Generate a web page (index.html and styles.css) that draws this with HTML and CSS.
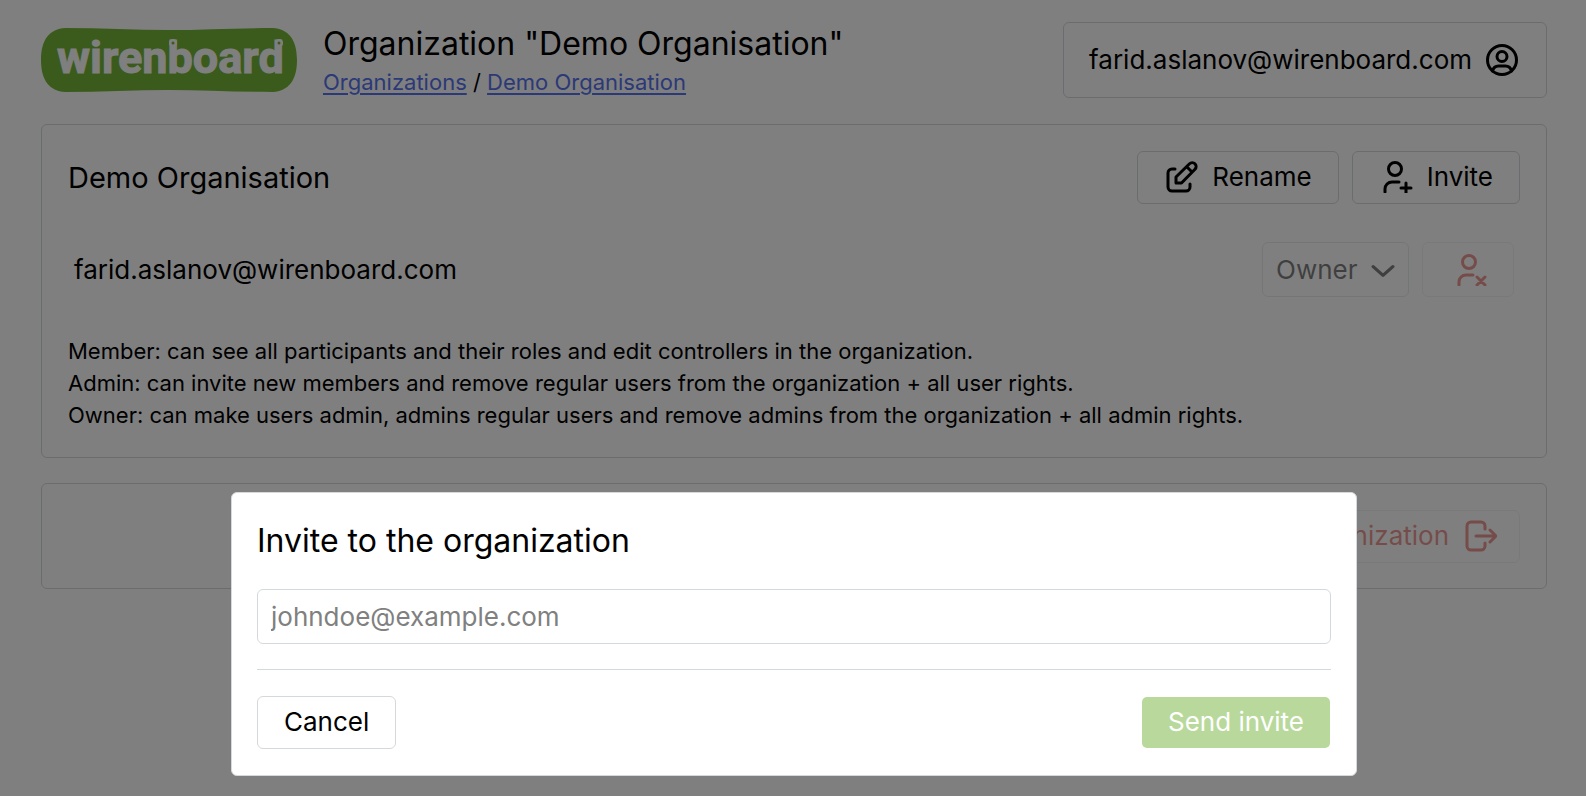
FILE: index.html
```
<!DOCTYPE html>
<html lang="en">
<head>
<meta charset="utf-8">
<title>Organization "Demo Organisation"</title>
<link rel="stylesheet" href="styles.css">
</head>
<body>
<div class="page">
  <header class="header">
    <svg class="logo" viewBox="0 0 256 64" role="img" aria-label="wirenboard">
      <path class="logo-plate" d="M0 32C0 11 9 1 24 0C60 0 95 2 128 2S196 0 232 0C247 1 256 11 256 32S247 63 232 64C196 64 161 62 128 62S60 64 24 64C9 63 0 53 0 32Z"/>
      <text class="logo-text" x="16" y="45">wirenboard</text>
      <circle class="logo-knob" cx="132" cy="15" r="4"/><circle class="logo-knob" cx="238" cy="15" r="4"/>
      <circle class="logo-plate" cx="132" cy="15" r="1.500"/><circle class="logo-plate" cx="238" cy="15" r="1.500"/>
    </svg>
    <div class="heading">
      <h1 class="title">Organization "Demo Organisation"</h1>
      <nav class="crumbs" aria-label="Breadcrumb"><a href="#organizations">Organizations</a> / <a href="#demo">Demo Organisation</a></nav>
    </div>
    <button class="account" type="button">farid.aslanov@wirenboard.com
      <svg class="icon" viewBox="0 0 32 32"><circle cx="16" cy="16" r="14.500"/><circle cx="16" cy="12.500" r="5"/><path d="M6.500 27c1-4 3.500-5 6-5h7c2.500 0 5 1 6 5"/></svg>
    </button>
  </header>

  <main class="main">
    <section class="card">
      <div class="card-head">
        <h2 class="subtitle">Demo Organisation</h2>
        <div class="actions">
          <button class="btn btn-icon" type="button"><svg class="icon" viewBox="0 0 32 32"><path d="M9 8H6a4 4 0 0 0-4 4v14a4 4 0 0 0 4 4h14a4 4 0 0 0 4-4v-3"/><path d="M10 22v-6L23.500 2.800a3.700 3.700 0 0 1 5.500 5.400L15.500 22zM21 6l5 5"/></svg>Rename</button>
          <button class="btn btn-icon" type="button"><svg class="icon" viewBox="0 0 32 32"><circle cx="14" cy="8" r="6.500"/><path d="M4 31v-3a7 7 0 0 1 7-7h7M25 22v10M20 27h10"/></svg>Invite</button>
        </div>
      </div>
      <ul class="members">
        <li class="member">
          <span class="member-name">farid.aslanov@wirenboard.com</span>
          <div class="actions">
            <span class="role-box">
              <select class="role" aria-label="Role" disabled><option>Owner</option></select>
              <svg class="chevron" viewBox="0 0 22 12"><path d="M2 2l9 8 9-8"/></svg>
            </span>
            <button class="btn btn-danger btn-remove" type="button" aria-label="Remove member" disabled><svg class="icon" viewBox="0 0 32 32"><circle cx="14" cy="8" r="6.500"/><path d="M4 31v-3a7 7 0 0 1 7-7h7M22 23l8 8M30 23l-8 8"/></svg></button>
          </div>
        </li>
      </ul>
      <div class="notes">
        <p>Member: can see all participants and their roles and edit controllers in the organization.</p>
        <p>Admin: can invite new members and remove regular users from the organization + all user rights.</p>
        <p>Owner: can make users admin, admins regular users and remove admins from the organization + all admin rights.</p>
      </div>
    </section>

    <section class="card card-leave">
      <button class="btn btn-danger btn-leave" type="button" disabled>Leave the organization<svg class="icon" viewBox="0 0 32 32"><path d="M20 9V6a4 4 0 0 0-4-4H6a4 4 0 0 0-4 4v20a4 4 0 0 0 4 4h10a4 4 0 0 0 4-4v-3M11 16h20M25 10l6 6-6 6"/></svg></button>
    </section>
  </main>
</div>

<div class="overlay">
  <form class="modal" role="dialog" aria-modal="true" aria-labelledby="invite-title">
    <h2 class="modal-title" id="invite-title">Invite to the organization</h2>
    <input class="field" type="email" placeholder="johndoe@example.com" aria-label="Email">
    <div class="modal-foot">
      <button class="btn" type="button">Cancel</button>
      <button class="btn btn-primary" type="submit" disabled>Send invite</button>
    </div>
  </form>
</div>
</body>
</html>
```
FILE: styles.css
```
* { box-sizing: border-box; }
body {
  margin: 0;
  background: #fff;
  color: #000;
  font: 400 26px/32px Inter, "Liberation Sans", sans-serif;
}
h1, h2, p, ul { margin: 0; padding: 0; }
h1, h2 { font-weight: 400; }
button, input, select { font: inherit; color: inherit; }

.page { padding: 22px 39px 26px 41px; }
.header { display: flex; align-items: center; gap: 26px; margin-bottom: 26px; }
.logo { width: 256px; height: 64px; flex: none; }
.logo-plate { fill: #76b738; }
.logo-text { fill: #fff; stroke: #fff; stroke-width: 1; font: 700 45px Roboto, sans-serif; }
.logo-knob { fill: #fff; }
.heading { flex: 1; min-width: 0; }
.title { font-size: 32px; line-height: 44px; }
.crumbs { font-size: 22px; line-height: 32px; }
.crumbs a { color: #5872f0; text-decoration-thickness: 2px; text-underline-offset: 3px; }
.account {
  display: flex; align-items: center; gap: 14px;
  padding: 21px 28px 21px 25px;
  background: none; border: 1px solid #d5d9dc; border-radius: 6px;
}
.icon {
  width: 32px; height: 32px; flex: none;
  fill: none; stroke: currentColor; stroke-width: 3;
  stroke-linecap: round; stroke-linejoin: round;
}

.main { display: flex; flex-direction: column; gap: 25px; }
.card { border: 1px solid #d5d9dc; border-radius: 6px; padding: 26px; }
.card-head, .member { display: flex; align-items: center; justify-content: space-between; }
.subtitle { font-size: 29px; line-height: 38px; }
.actions { display: flex; gap: 13px; }
.btn {
  display: flex; align-items: center; justify-content: center; gap: 16px;
  height: 53px; padding: 0 26px 1px;
  background: none; border: 1px solid #d5d9dc; border-radius: 6px;
}
.btn-icon { padding-left: 28px; gap: 14px; }
.members { list-style: none; padding: 38px 6px; }
.role-box { position: relative; display: flex; opacity: .5; }
.role {
  appearance: none; height: 55px; width: 147px; padding: 0 13px;
  background: none; border: 1px solid #d5d9dc; border-radius: 6px; opacity: 1;
}
.chevron {
  position: absolute; right: 14px; top: 22px; width: 24px; height: 14px;
  fill: none; stroke: currentColor; stroke-width: 3; stroke-linecap: round; stroke-linejoin: round;
  pointer-events: none;
}
.btn-danger { color: #dc352d; border-color: #e6e8ea; opacity: .5; }
.btn-remove { height: 55px; width: 92px; padding: 0 24px 0 30px; }
.btn-leave { padding-right: 22px; }
.notes { font-size: 22px; line-height: 32px; }
.card-leave { display: flex; justify-content: flex-end; padding-bottom: 25px; }

.overlay {
  position: fixed; inset: 0;
  display: flex; align-items: flex-end; justify-content: center;
  padding: 20px 229px 20px 231px;
  background: rgba(0, 0, 0, .5);
}
.modal {
  flex: 1; padding: 25px 25px 26px; background: #fff;
  border: 1px solid #d5d9dc; border-radius: 6px;
}
.modal-title { font-size: 32px; line-height: 45px; margin-bottom: 26px; }
.field {
  display: block; width: 100%; height: 55px; padding: 0 13px 1px;
  background: none; border: 1px solid #d5d9dc; border-radius: 6px;
}
.field::placeholder { color: #808080; }
.modal-foot {
  display: flex; justify-content: space-between;
  margin-top: 25px; padding-top: 26px; border-top: 1px solid #d5d9dc;
}
.btn-primary { color: #fff; background: #b8d99b; background-clip: padding-box; border-color: transparent; }
```
